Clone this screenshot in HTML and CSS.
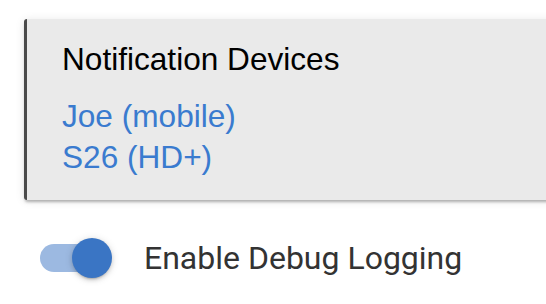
FILE: index.html
```html
<!DOCTYPE html>
<html lang="en">
<head>
<meta charset="utf-8">
<title>Settings</title>
<link rel="stylesheet" href="styles.css">
</head>
<body>
<div class="page">
  <section class="card">
    <h2 class="card-title">Notification Devices</h2>
    <ul class="device-list">
      <li><a class="device-link" href="#">Joe (mobile)</a></li>
      <li><a class="device-link" href="#">S26 (HD+)</a></li>
    </ul>
  </section>
  <label class="toggle-row">
    <span class="switch">
      <span class="switch-track"></span>
      <span class="switch-thumb"></span>
    </span>
    <span class="toggle-label">Enable Debug Logging</span>
  </label>
</div>
</body>
</html>
```
FILE: styles.css
```css
html, body {
  margin: 0;
  padding: 0;
  background: #ffffff;
  overflow: hidden;
}

.page {
  width: 546px;
  height: 304px;
  overflow: hidden;
  padding-top: 19px;
  box-sizing: border-box;
}

.card {
  margin-left: 24px;
  width: 600px;
  box-sizing: border-box;
  background: #eaeaea;
  border-left: 3px solid #4b4b4b;
  border-radius: 3px;
  padding: 22px 0 22px 35px;
  box-shadow: 0 3px 3px -1px rgba(0, 0, 0, 0.28), 0 1px 10px rgba(0, 0, 0, 0.1);
  font-family: "Liberation Sans", Arial, sans-serif;
}

.card-title {
  margin: 0;
  font-size: 31.6px;
  line-height: 36px;
  font-weight: normal;
  color: #000000;
}

.device-list {
  list-style: none;
  margin: 19px 0 0;
  padding: 0;
}

.device-list li {
  font-size: 31.6px;
  line-height: 41px;
}

.device-link {
  color: #3a7bcf;
  text-decoration: none;
}

.toggle-row {
  display: flex;
  align-items: center;
  margin: 37.5px 0 0 40px;
  gap: 32px;
}

.switch {
  position: relative;
  display: block;
  width: 72px;
  height: 40px;
  flex: none;
}

.switch-track {
  position: absolute;
  left: 0;
  top: 6px;
  width: 68px;
  height: 28px;
  border-radius: 14px;
  background: #9cb9e1;
}

.switch-thumb {
  position: absolute;
  left: 32px;
  top: 0;
  width: 40px;
  height: 40px;
  border-radius: 50%;
  background: #3a75c4;
  box-shadow: 0 3px 2px -2px rgba(0, 0, 0, 0.2), 0 2px 4px rgba(0, 0, 0, 0.14), 0 1px 8px rgba(0, 0, 0, 0.12);
}

.toggle-label {
  font-family: Roboto, "Noto Sans", sans-serif;
  font-size: 32px;
  line-height: 40px;
  color: #333333;
}
```
